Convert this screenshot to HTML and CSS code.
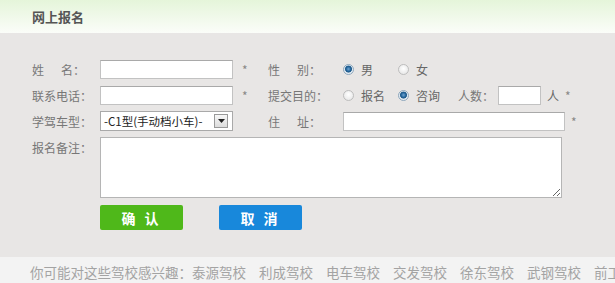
FILE: index.html
```html
<!DOCTYPE html>
<html lang="zh-CN">
  <head>
    <meta charset="utf-8" />
    <title>网上报名</title>
    <link rel="stylesheet" href="styles.css">
  </head>
  <body>
    <div class="head">
      <h2 class="head-title">网上报名</h2>
    </div>
    <form class="signup">
      <div class="row">
        <label class="lbl">姓<span class="gap"></span>名：</label>
        <input class="txt" type="text" />
        <span class="star">*</span>
        <label class="lbl lbl-r">性<span class="gap"></span>别：</label>
        <span class="opt"><i class="radio on"></i>男</span>
        <span class="opt"><i class="radio"></i>女</span>
      </div>
      <div class="row">
        <label class="lbl">联系电话：</label>
        <input class="txt" type="text" />
        <span class="star">*</span>
        <label class="lbl lbl-r">提交目的：</label>
        <span class="opt"><i class="radio"></i>报名</span>
        <span class="opt"><i class="radio on"></i>咨询</span>
        <label class="lbl-num">人数：</label>
        <input class="txt txt-num" type="text" />
        <span class="unit">人</span>
        <span class="star-s">*</span>
      </div>
      <div class="row">
        <label class="lbl">学驾车型：</label>
        <div class="sel">
          <span class="sel-text">-C1型(手动档小车)-</span>
          <span class="sel-btn"><svg width="7" height="4" viewBox="0 0 7 4"><path d="M0 0h7L3.5 4z" fill="#222"/></svg></span>
        </div>
        <span class="star"></span>
        <label class="lbl lbl-r">住<span class="gap"></span>址：</label>
        <input class="txt txt-addr" type="text" />
        <span class="star-s">*</span>
      </div>
      <div class="row row-note">
        <label class="lbl">报名备注：</label>
        <textarea class="note"></textarea>
      </div>
      <div class="row row-btns">
        <button type="button" class="btn btn-ok">确 认</button>
        <button type="button" class="btn btn-cancel">取 消</button>
      </div>
    </form>
    <div class="foot">
      你可能对这些驾校感兴趣：<a>泰源驾校</a><a>利成驾校</a><a>电车驾校</a><a>交发驾校</a><a>徐东驾校</a><a>武钢驾校</a><a>前工驾校</a>
    </div>
  </body>
</html>
```

FILE: styles.css
```css
body {
  margin: 0;
  width: 615px;
  height: 283px;
  overflow: hidden;
  background: #f3f3f3;
  font-family: "Noto Sans CJK SC", "Liberation Sans", sans-serif;
  font-size: 12px;
  color: #777;
}

.head {
  height: 33px;
  background: linear-gradient(#e5f5da, #fbfdf9);
  padding-left: 32px;
}

.head-title {
  margin: 0;
  font-size: 13px;
  line-height: 33px;
  color: #555;
  font-weight: bold;
}

.signup {
  background: #e8e6e5;
  padding: 26px 0 27px 32px;
  display: flex;
  flex-direction: column;
  gap: 6px;
}

.row {
  display: flex;
  align-items: center;
  height: 20px;
}

.lbl {
  width: 68px;
  white-space: nowrap;
}

.gap {
  display: inline-block;
  width: 17px;
}

.lbl-r {
  width: 75px;
}

.txt {
  box-sizing: border-box;
  width: 133px;
  height: 19px;
  margin: 0;
  border: 1px solid #c2c2c2;
  border-top-color: #a9a9a9;
  background: #fff;
  outline: none;
}

.star {
  width: 35px;
  padding-left: 9px;
  box-sizing: border-box;
  color: #888;
}

.star-s {
  padding-left: 6px;
  color: #888;
}

.opt {
  width: 55px;
  display: flex;
  align-items: center;
  color: #666;
}

.radio {
  box-sizing: border-box;
  width: 11px;
  height: 11px;
  border-radius: 50%;
  border: 1px solid #bdbdbd;
  background: radial-gradient(circle at 50% 40%, #fff, #e2e2e2);
  margin-right: 7px;
}

.radio.on {
  border-color: #8fa8bd;
  background: radial-gradient(circle at 50% 45%, #6fa6d4 0, #1f5f95 2.5px, #28628f 3.2px, #dfe8f0 3.8px, #f4f6f8);
}

.lbl-num {
  margin-left: 5px;
  width: 40px;
}

.txt-num {
  width: 43px;
}

.unit {
  margin-left: 6px;
  color: #666;
}

.sel {
  box-sizing: border-box;
  width: 133px;
  height: 20px;
  border: 1px solid #a9a9a9;
  background: #fff;
  display: flex;
  align-items: center;
  justify-content: space-between;
  padding: 0 4px 0 3px;
  color: #222;
}

.sel-text {
  font-size: 11.5px;
}

.sel-btn {
  box-sizing: border-box;
  width: 14px;
  height: 14px;
  border: 1px solid #999;
  background: linear-gradient(#f7f7f7, #dcdcdc);
  display: flex;
  align-items: center;
  justify-content: center;
}

.txt-addr {
  width: 222px;
}

.row-note {
  height: 61px;
  align-items: flex-start;
}

.row-note .lbl {
  padding-top: 2px;
}

.note {
  box-sizing: border-box;
  width: 462px;
  height: 61px;
  margin: 0;
  border: 1px solid #b5b5b5;
  background: #fff;
  outline: none;
}

.row-btns {
  height: 25px;
  margin-top: 1px;
  padding-left: 68px;
  gap: 36px;
}

.btn {
  width: 83px;
  height: 25px;
  border: 0;
  border-radius: 2px;
  color: #fff;
  font-family: inherit;
  font-size: 14px;
  font-weight: bold;
  letter-spacing: 3px;
  padding: 0;
}

.btn-ok {
  background: #4fb81a;
}

.btn-cancel {
  background: #1888db;
}

.foot {
  padding: 6px 0 0 30px;
  font-size: 13.5px;
  line-height: 18px;
  color: #a3a3a3;
  white-space: nowrap;
}

.foot a {
  margin-right: 13px;
}
```
